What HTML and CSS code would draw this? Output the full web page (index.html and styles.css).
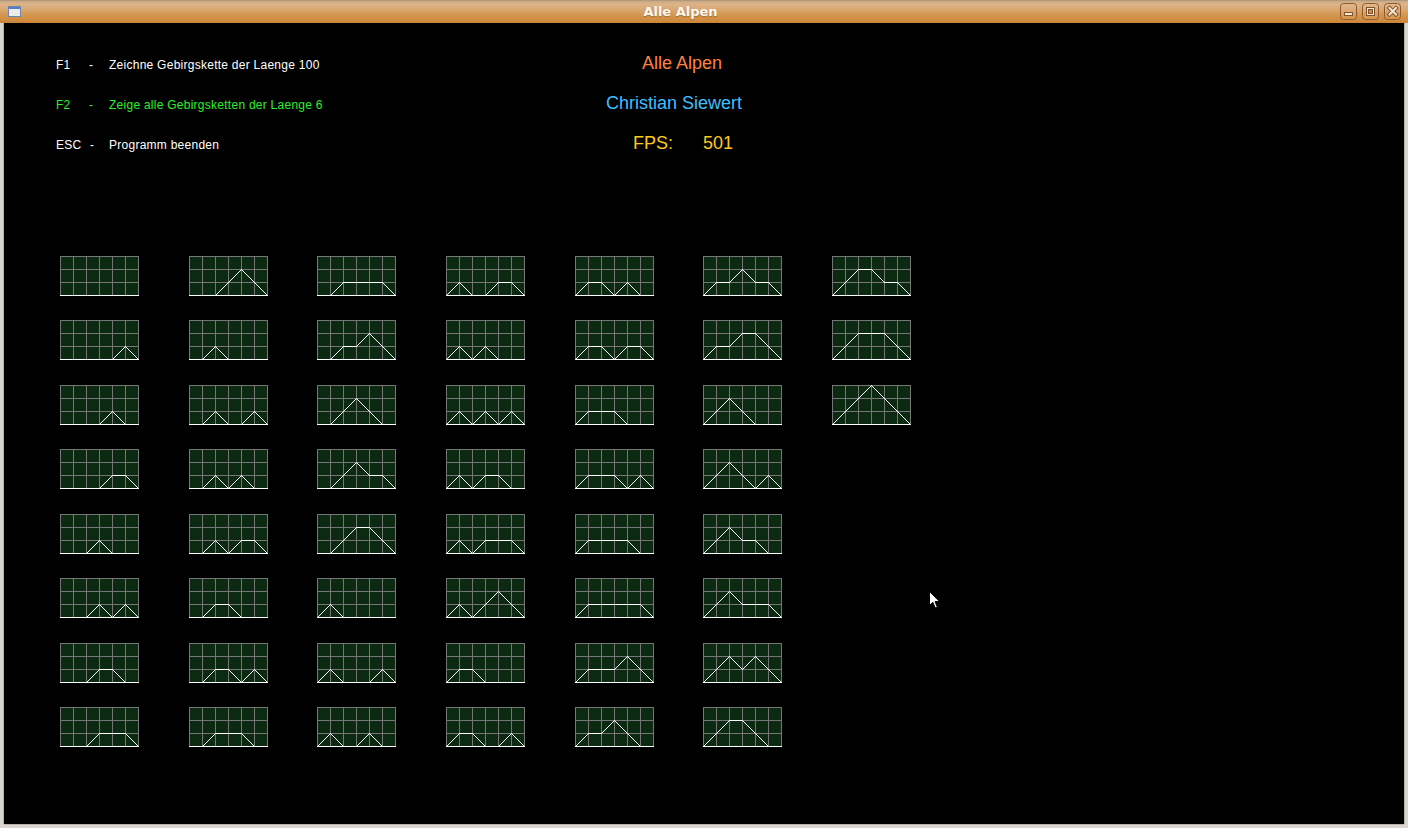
FILE: index.html
```html
<!DOCTYPE html>
<html lang="de">
<head>
<meta charset="utf-8">
<title>Alle Alpen</title>
<link rel="stylesheet" href="styles.css">
</head>
<body>
<div class="window">
  <div class="titlebar">
    <svg class="app-icon" width="13" height="11" viewBox="0 0 13 11">
      <rect x="0.5" y="0.5" width="12" height="10" fill="#ececec" stroke="#6f86b3"/>
      <rect x="1" y="1" width="11" height="2" fill="#4f7fc4"/>
    </svg>
    <div class="win-title">Alle Alpen</div>
    <div class="win-buttons">
      <svg class="win-btn" width="17" height="17" viewBox="0 0 17 17">
        <rect class="btn-frame" x="0.5" y="0.5" width="16" height="16" rx="3"/>
        <rect class="btn-glyph" x="4.5" y="9.5" width="8" height="3"/>
      </svg>
      <svg class="win-btn" width="17" height="17" viewBox="0 0 17 17">
        <rect class="btn-frame" x="0.5" y="0.5" width="16" height="16" rx="3"/>
        <rect class="btn-glyph" x="4.5" y="4.5" width="8" height="8"/>
        <rect class="btn-hole" x="6.5" y="6.5" width="4" height="4"/>
      </svg>
      <svg class="win-btn" width="17" height="17" viewBox="0 0 17 17">
        <rect class="btn-frame" x="0.5" y="0.5" width="16" height="16" rx="3"/>
        <path class="btn-x-outline" d="M5.5 5L12 11.5M12 5L5.5 11.5"/>
        <path class="btn-x" d="M5.5 5L12 11.5M12 5L5.5 11.5"/>
      </svg>
    </div>
  </div>

  <div class="content">
    <div class="header">
      <div class="menu-line"><span class="key">F1</span><span class="dash">-</span><span>Zeichne Gebirgskette der Laenge 100</span></div>
      <div class="headline headline-title">Alle Alpen</div>
      <div class="menu-line menu-active"><span class="key">F2</span><span class="dash">-</span><span>Zeige alle Gebirgsketten der Laenge 6</span></div>
      <div class="headline headline-author">Christian Siewert</div>
      <div class="menu-line"><span class="key key-esc">ESC</span><span class="dash dash-esc">-</span><span>Programm beenden</span></div>
      <div class="headline headline-fps"><span class="fps-label">FPS:</span><span>501</span></div>
    </div>

    <div class="charts">
      <svg class="chart" width="79" height="40"><g class="trace"><path d="M0 39H78"/><polyline points="0,39 13,39 26,39 39,39 52,39 65,39 78,39"/></g></svg>
      <svg class="chart" width="79" height="40"><g class="trace"><path d="M0 39H78"/><polyline points="0,39 13,39 26,39 39,39 52,39 65,26 78,39"/></g></svg>
      <svg class="chart" width="79" height="40"><g class="trace"><path d="M0 39H78"/><polyline points="0,39 13,39 26,39 39,39 52,26 65,39 78,39"/></g></svg>
      <svg class="chart" width="79" height="40"><g class="trace"><path d="M0 39H78"/><polyline points="0,39 13,39 26,39 39,39 52,26 65,26 78,39"/></g></svg>
      <svg class="chart" width="79" height="40"><g class="trace"><path d="M0 39H78"/><polyline points="0,39 13,39 26,39 39,26 52,39 65,39 78,39"/></g></svg>
      <svg class="chart" width="79" height="40"><g class="trace"><path d="M0 39H78"/><polyline points="0,39 13,39 26,39 39,26 52,39 65,26 78,39"/></g></svg>
      <svg class="chart" width="79" height="40"><g class="trace"><path d="M0 39H78"/><polyline points="0,39 13,39 26,39 39,26 52,26 65,39 78,39"/></g></svg>
      <svg class="chart" width="79" height="40"><g class="trace"><path d="M0 39H78"/><polyline points="0,39 13,39 26,39 39,26 52,26 65,26 78,39"/></g></svg>

      <svg class="chart" width="79" height="40"><g class="trace"><path d="M0 39H78"/><polyline points="0,39 13,39 26,39 39,26 52,13 65,26 78,39"/></g></svg>
      <svg class="chart" width="79" height="40"><g class="trace"><path d="M0 39H78"/><polyline points="0,39 13,39 26,26 39,39 52,39 65,39 78,39"/></g></svg>
      <svg class="chart" width="79" height="40"><g class="trace"><path d="M0 39H78"/><polyline points="0,39 13,39 26,26 39,39 52,39 65,26 78,39"/></g></svg>
      <svg class="chart" width="79" height="40"><g class="trace"><path d="M0 39H78"/><polyline points="0,39 13,39 26,26 39,39 52,26 65,39 78,39"/></g></svg>
      <svg class="chart" width="79" height="40"><g class="trace"><path d="M0 39H78"/><polyline points="0,39 13,39 26,26 39,39 52,26 65,26 78,39"/></g></svg>
      <svg class="chart" width="79" height="40"><g class="trace"><path d="M0 39H78"/><polyline points="0,39 13,39 26,26 39,26 52,39 65,39 78,39"/></g></svg>
      <svg class="chart" width="79" height="40"><g class="trace"><path d="M0 39H78"/><polyline points="0,39 13,39 26,26 39,26 52,39 65,26 78,39"/></g></svg>
      <svg class="chart" width="79" height="40"><g class="trace"><path d="M0 39H78"/><polyline points="0,39 13,39 26,26 39,26 52,26 65,39 78,39"/></g></svg>

      <svg class="chart" width="79" height="40"><g class="trace"><path d="M0 39H78"/><polyline points="0,39 13,39 26,26 39,26 52,26 65,26 78,39"/></g></svg>
      <svg class="chart" width="79" height="40"><g class="trace"><path d="M0 39H78"/><polyline points="0,39 13,39 26,26 39,26 52,13 65,26 78,39"/></g></svg>
      <svg class="chart" width="79" height="40"><g class="trace"><path d="M0 39H78"/><polyline points="0,39 13,39 26,26 39,13 52,26 65,39 78,39"/></g></svg>
      <svg class="chart" width="79" height="40"><g class="trace"><path d="M0 39H78"/><polyline points="0,39 13,39 26,26 39,13 52,26 65,26 78,39"/></g></svg>
      <svg class="chart" width="79" height="40"><g class="trace"><path d="M0 39H78"/><polyline points="0,39 13,39 26,26 39,13 52,13 65,26 78,39"/></g></svg>
      <svg class="chart" width="79" height="40"><g class="trace"><path d="M0 39H78"/><polyline points="0,39 13,26 26,39 39,39 52,39 65,39 78,39"/></g></svg>
      <svg class="chart" width="79" height="40"><g class="trace"><path d="M0 39H78"/><polyline points="0,39 13,26 26,39 39,39 52,39 65,26 78,39"/></g></svg>
      <svg class="chart" width="79" height="40"><g class="trace"><path d="M0 39H78"/><polyline points="0,39 13,26 26,39 39,39 52,26 65,39 78,39"/></g></svg>

      <svg class="chart" width="79" height="40"><g class="trace"><path d="M0 39H78"/><polyline points="0,39 13,26 26,39 39,39 52,26 65,26 78,39"/></g></svg>
      <svg class="chart" width="79" height="40"><g class="trace"><path d="M0 39H78"/><polyline points="0,39 13,26 26,39 39,26 52,39 65,39 78,39"/></g></svg>
      <svg class="chart" width="79" height="40"><g class="trace"><path d="M0 39H78"/><polyline points="0,39 13,26 26,39 39,26 52,39 65,26 78,39"/></g></svg>
      <svg class="chart" width="79" height="40"><g class="trace"><path d="M0 39H78"/><polyline points="0,39 13,26 26,39 39,26 52,26 65,39 78,39"/></g></svg>
      <svg class="chart" width="79" height="40"><g class="trace"><path d="M0 39H78"/><polyline points="0,39 13,26 26,39 39,26 52,26 65,26 78,39"/></g></svg>
      <svg class="chart" width="79" height="40"><g class="trace"><path d="M0 39H78"/><polyline points="0,39 13,26 26,39 39,26 52,13 65,26 78,39"/></g></svg>
      <svg class="chart" width="79" height="40"><g class="trace"><path d="M0 39H78"/><polyline points="0,39 13,26 26,26 39,39 52,39 65,39 78,39"/></g></svg>
      <svg class="chart" width="79" height="40"><g class="trace"><path d="M0 39H78"/><polyline points="0,39 13,26 26,26 39,39 52,39 65,26 78,39"/></g></svg>

      <svg class="chart" width="79" height="40"><g class="trace"><path d="M0 39H78"/><polyline points="0,39 13,26 26,26 39,39 52,26 65,39 78,39"/></g></svg>
      <svg class="chart" width="79" height="40"><g class="trace"><path d="M0 39H78"/><polyline points="0,39 13,26 26,26 39,39 52,26 65,26 78,39"/></g></svg>
      <svg class="chart" width="79" height="40"><g class="trace"><path d="M0 39H78"/><polyline points="0,39 13,26 26,26 39,26 52,39 65,39 78,39"/></g></svg>
      <svg class="chart" width="79" height="40"><g class="trace"><path d="M0 39H78"/><polyline points="0,39 13,26 26,26 39,26 52,39 65,26 78,39"/></g></svg>
      <svg class="chart" width="79" height="40"><g class="trace"><path d="M0 39H78"/><polyline points="0,39 13,26 26,26 39,26 52,26 65,39 78,39"/></g></svg>
      <svg class="chart" width="79" height="40"><g class="trace"><path d="M0 39H78"/><polyline points="0,39 13,26 26,26 39,26 52,26 65,26 78,39"/></g></svg>
      <svg class="chart" width="79" height="40"><g class="trace"><path d="M0 39H78"/><polyline points="0,39 13,26 26,26 39,26 52,13 65,26 78,39"/></g></svg>
      <svg class="chart" width="79" height="40"><g class="trace"><path d="M0 39H78"/><polyline points="0,39 13,26 26,26 39,13 52,26 65,39 78,39"/></g></svg>

      <svg class="chart" width="79" height="40"><g class="trace"><path d="M0 39H78"/><polyline points="0,39 13,26 26,26 39,13 52,26 65,26 78,39"/></g></svg>
      <svg class="chart" width="79" height="40"><g class="trace"><path d="M0 39H78"/><polyline points="0,39 13,26 26,26 39,13 52,13 65,26 78,39"/></g></svg>
      <svg class="chart" width="79" height="40"><g class="trace"><path d="M0 39H78"/><polyline points="0,39 13,26 26,13 39,26 52,39 65,39 78,39"/></g></svg>
      <svg class="chart" width="79" height="40"><g class="trace"><path d="M0 39H78"/><polyline points="0,39 13,26 26,13 39,26 52,39 65,26 78,39"/></g></svg>
      <svg class="chart" width="79" height="40"><g class="trace"><path d="M0 39H78"/><polyline points="0,39 13,26 26,13 39,26 52,26 65,39 78,39"/></g></svg>
      <svg class="chart" width="79" height="40"><g class="trace"><path d="M0 39H78"/><polyline points="0,39 13,26 26,13 39,26 52,26 65,26 78,39"/></g></svg>
      <svg class="chart" width="79" height="40"><g class="trace"><path d="M0 39H78"/><polyline points="0,39 13,26 26,13 39,26 52,13 65,26 78,39"/></g></svg>
      <svg class="chart" width="79" height="40"><g class="trace"><path d="M0 39H78"/><polyline points="0,39 13,26 26,13 39,13 52,26 65,39 78,39"/></g></svg>

      <svg class="chart" width="79" height="40"><g class="trace"><path d="M0 39H78"/><polyline points="0,39 13,26 26,13 39,13 52,26 65,26 78,39"/></g></svg>
      <svg class="chart" width="79" height="40"><g class="trace"><path d="M0 39H78"/><polyline points="0,39 13,26 26,13 39,13 52,13 65,26 78,39"/></g></svg>
      <svg class="chart" width="79" height="40"><g class="trace"><path d="M0 39H78"/><polyline points="0,39 13,26 26,13 39,0 52,13 65,26 78,39"/></g></svg>
    </div>

    <svg class="cursor" width="12" height="19" viewBox="0 0 12 19">
      <path d="M0.5 0.5L0.5 14.5L3.8 11.3L6.3 17L8.4 16.1L6 10.6L10.5 10.6Z" fill="#fff" stroke="#000" stroke-width="1" stroke-linejoin="miter"/>
    </svg>
  </div>
</div>
</body>
</html>
```

FILE: styles.css
```css
* {
  box-sizing: border-box;
}

html,
body {
  margin: 0;
  padding: 0;
}

body {
  width: 1408px;
  height: 828px;
  overflow: hidden;
  background: #d9d6cf;
  font-family: "Liberation Sans", Arial, sans-serif;
}

.window {
  display: flex;
  flex-direction: column;
  height: 828px;
}

/* ---------- title bar ---------- */
.titlebar {
  height: 23px;
  flex: none;
  display: flex;
  align-items: center;
  padding: 0 7px 0 8px;
  background: linear-gradient(to bottom,
    #9c8a78 0px,
    #c9a983 1px,
    #dcb48a 4px,
    #dba874 9px,
    #d4964f 15px,
    #ce883c 22px,
    #c78137 23px);
}

.app-icon {
  flex: none;
  display: block;
}

.win-title {
  flex: 1;
  text-align: center;
  font-family: "DejaVu Sans", "Liberation Sans", sans-serif;
  font-weight: bold;
  font-size: 13px;
  line-height: 23px;
  color: #fcf8f2;
  text-shadow: 0 1px 1px rgba(110, 60, 15, 0.45);
}

.win-buttons {
  flex: none;
  display: flex;
  gap: 5px;
}

.win-btn {
  display: block;
}

.btn-frame {
  fill: rgba(255, 235, 205, 0.08);
  stroke: #8d5b2f;
  stroke-width: 1;
}

.btn-glyph {
  fill: #f4e8d6;
  stroke: #82522a;
  stroke-width: 1;
}

.btn-hole {
  fill: #cf8c48;
  stroke: #82522a;
  stroke-width: 1;
}

.btn-x-outline {
  fill: none;
  stroke: #82522a;
  stroke-width: 4;
  stroke-linecap: square;
}

.btn-x {
  fill: none;
  stroke: #f4e8d6;
  stroke-width: 2;
  stroke-linecap: square;
}

/* ---------- content ---------- */
.content {
  position: relative;
  flex: 1;
  margin: 0 4px 4px;
  background: #000;
  box-shadow: -1px 0 0 #b8b4ac, 1px 0 0 #b8b4ac, 0 1px 0 #b8b4ac;
}

.header {
  display: grid;
  grid-template-columns: 550px auto;
  grid-template-rows: repeat(3, 40px);
  align-items: baseline;
  justify-content: start;
  padding: 20px 0 0 52px;
}

.menu-line {
  font-size: 12px;
  line-height: 40px;
  letter-spacing: 0.26px;
  color: #ffffff;
  white-space: nowrap;
}

.menu-active {
  color: #2af02a;
}

.key {
  display: inline-block;
  width: 33px;
}

.key-esc {
  width: 34px;
}

.dash {
  display: inline-block;
  width: 20px;
}

.dash-esc {
  width: 19px;
}

.headline {
  font-size: 18px;
  line-height: 40px;
  white-space: nowrap;
}

.headline-title {
  color: #ff8040;
  margin-left: 36px;
}

.headline-author {
  color: #3fbfff;
}

.headline-fps {
  color: #ffc81e;
  margin-left: 27px;
}

.fps-label {
  display: inline-block;
  width: 70px;
}

/* ---------- charts ---------- */
.charts {
  display: grid;
  grid-auto-flow: column;
  grid-template-rows: repeat(8, 40px);
  grid-auto-columns: 79px;
  column-gap: 49.67px;
  row-gap: 24.43px;
  margin: 93px 0 0 56px;
  justify-content: start;
}

.chart {
  display: block;
  background-color: #0c2912;
  background-image:
    linear-gradient(to right, #767676 1px, transparent 1px),
    linear-gradient(to bottom, #767676 1px, transparent 1px);
  background-size: 13px 13px;
}

.trace {
  transform: translate(0.5px, 0.5px);
}

.trace path,
.trace polyline {
  fill: none;
  stroke: #ffffff;
  stroke-width: 1;
  stroke-linecap: square;
  shape-rendering: crispEdges;
}

.cursor {
  position: absolute;
  left: 925px;
  top: 568px;
  display: block;
}
```
